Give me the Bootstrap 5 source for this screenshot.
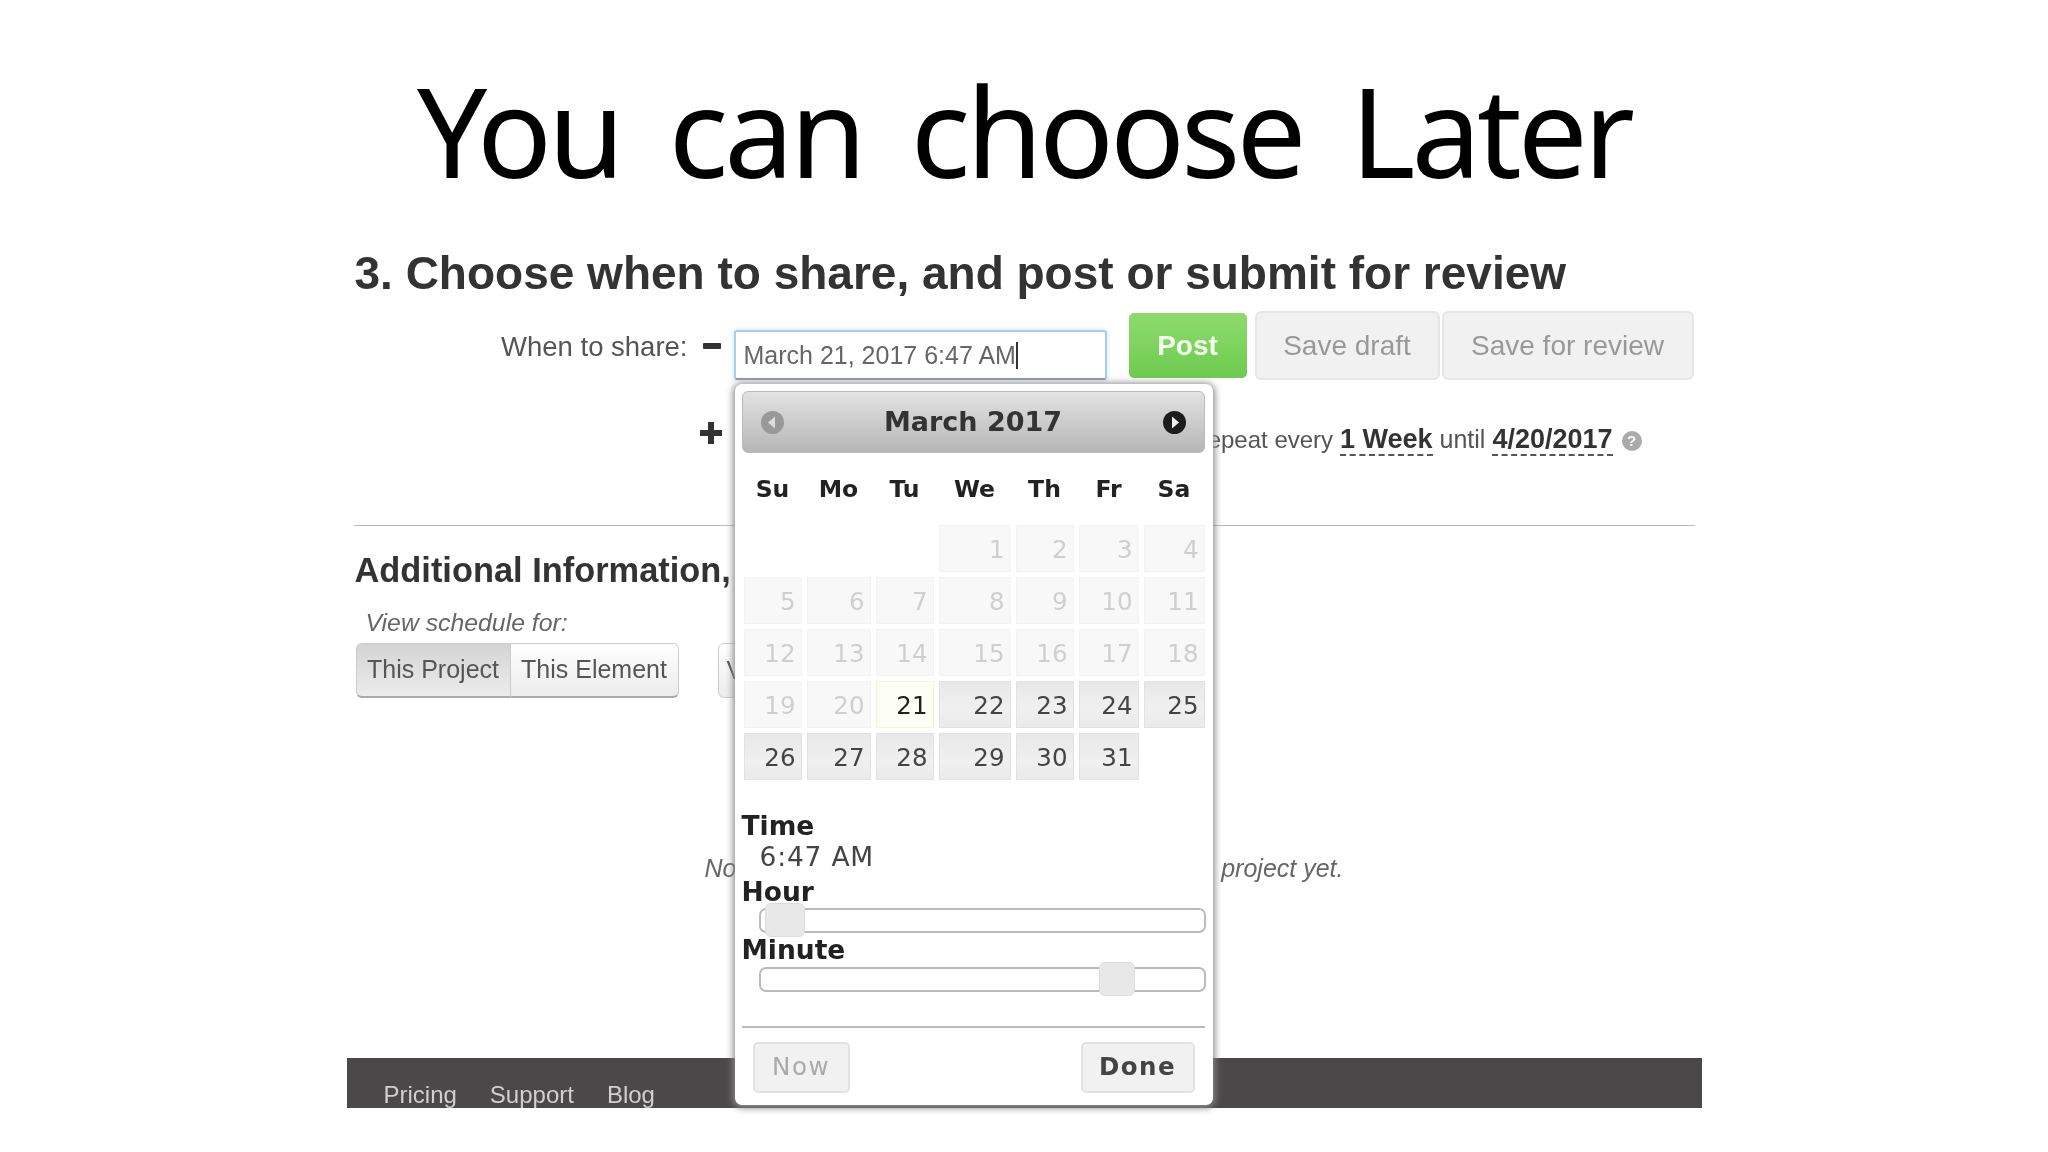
<!DOCTYPE html>
<html lang="en">
<head>
<meta charset="utf-8">
<title>You can choose Later</title>
<link href="https://cdn.jsdelivr.net/npm/bootstrap@5.3.0/dist/css/bootstrap.min.css" rel="stylesheet">
<style>
html,body{margin:0;background:#fff;height:1152px;overflow:hidden}
body{font-family:"Liberation Sans",Arial,sans-serif;color:#333}
.slide-title{height:240px;padding-top:45px;margin:0;text-align:center;font-family:"Noto Sans",sans-serif;font-weight:400;font-size:124px;line-height:170px;letter-spacing:-4px;word-spacing:20px;color:#000}
.shot{position:relative;width:1355px;height:868px;margin:0 auto;padding-top:11px;filter:blur(.5px)}
.step-title{margin:0 0 0 8px;font:700 46px/44px "Liberation Sans",sans-serif;color:#333}
.share-row{height:69px;margin-top:16px}
.share-label{width:341px;text-align:right;font-size:27.5px;line-height:71px;color:#555}
.mini-icon{display:block;flex:none}
.when-input.form-control{width:373px;height:50px;margin:19px 0 0 13px;padding:0 8px;border:2px solid #a9cfe8;border-bottom-color:#999;border-radius:3px;box-shadow:0 0 5px #bfe0f5;font-size:25px;line-height:46px;color:#666;background:#fff}
.caret-bar{display:inline-block;width:2px;height:27px;background:#333;vertical-align:-5px}
.btn.post-btn{width:118px;height:65px;margin:2px 0 0 22px;padding:0;border:0;border-radius:5px;background:linear-gradient(#8edb6c,#6ecb50);color:#f4fff0;font-weight:700;font-size:28px}
.btn.save-btn{height:69px;padding:0;border:2px solid #e6e6e6;border-radius:6px;background:#f1f1f1;color:#999;font-size:28px}
.repeat-row{height:44px;margin-top:37px}
.repeat-text{margin-left:auto;padding-right:60px;font-size:25px;line-height:44px;color:#555}
.repeat-lead{font-size:24px}
.repeat-text b{color:#333;font-size:27px;border-bottom:2px dashed #555;padding-bottom:0}
.help-dot{display:inline-block;width:20px;height:20px;margin-left:9px;border-radius:50%;background:#aaa;color:#fff;font-size:15px;font-weight:700;line-height:20px;text-align:center;vertical-align:2px}
.shot-rule{margin:64px 7px 0;border:0;border-top:1px solid #bbb;opacity:1}
.extra-title{margin:24px 0 0 8px;font:700 34.4px/40px "Liberation Sans",sans-serif;color:#333}
.view-label{margin:18px 0 0 19px;font-style:italic;font-size:24.8px;line-height:30px;color:#666}
.scope-row{margin:5px 0 0 9px;height:55px}
.btn-group .btn.scope-btn{height:55px;padding:0;border:1px solid #ccc;border-bottom:2px solid #aaa;background:linear-gradient(#fff,#ececec);color:#555;font-size:25px}
.btn-group .btn.scope-btn.picked{background:linear-gradient(#d4d4d4,#ececec)}
.btn.peek-btn{width:60px;height:55px;margin-left:39px;padding:0 8px;text-align:left;border:1px solid #ccc;background:linear-gradient(#fff,#ececec);color:#555;font-size:25px}
.empty-note{margin-top:155px;padding:0 358px;font-style:italic;font-size:25px;line-height:30px;color:#666}
.shot-foot{position:absolute;left:0;right:0;bottom:0;height:50px;overflow:hidden;background:#4a4849;padding:23px 0 0 37px;gap:33px;font-size:24px;line-height:28px}
.shot-foot a{color:#d0d0d0;text-decoration:none}
.dt-picker{position:absolute;left:388px;top:144px;width:478px;height:721px;padding:7px 8px 0 7px;background:#fff;border-radius:7px;box-shadow:0 1px 7px 2px #8c8c8c;font-family:"DejaVu Sans",Verdana,sans-serif;color:#333;z-index:5}
.dt-head{height:62px;padding:0 18px;border-radius:6px;border:1px solid #bbb;background:linear-gradient(#e2e2e2,#b6b6b6);font-weight:700;font-size:27px}
.dt-week,.dt-days{display:grid;grid-template-columns:58px 64px 58px 72px 58px 60px 61px;column-gap:5px;margin-left:2px}
.dt-week{margin-top:16px;height:40px;line-height:40px;text-align:center;font-weight:700;font-size:23.5px;color:#222}
.dt-days{margin-top:16px;row-gap:5px;grid-auto-rows:47px;font-size:24.5px;text-align:right}
.dt-cell{padding:0 5px;line-height:47px;border:1px solid #e2e2e2;background:linear-gradient(#e8e8e8,#f0f0f0 60%,#eaeaea);color:#444}
.dt-cell.off{border-color:#f3f3f3;background:#f8f8f8;color:#cfcfcf}
.dt-cell.today{border-color:#f2f6d6;background:#fdfef4;color:#222}
.dt-cap{font-weight:700;font-size:26.5px;line-height:28px;color:#222}
.dt-value{padding-left:18px;margin-top:2px;font-size:26.5px;line-height:30px;letter-spacing:.8px;color:#444}
.dt-track{position:relative;height:25px;margin:0 -1px 0 17px;border:2px solid #bbb;border-radius:7px;background:#fff}
.dt-thumb{position:absolute;top:-7px;height:34px;border-radius:6px;background:#e8e8e8;border:1px solid #ddd}
.dt-rule{margin:34px 0 0;border:0;border-top:2px solid #bbb;opacity:1}
.btn.dt-btn{height:51px;padding:0;border:2px solid #e2e2e2;border-radius:5px;background:#f1f1f1;font-family:"DejaVu Sans",sans-serif;font-size:24.5px;font-weight:700;letter-spacing:1.5px}
.btn.dt-now{width:97px;margin-left:11px;color:#aaa;font-weight:400}
.btn.dt-done{width:114px;margin-right:10px;color:#444}
.thumb-hour{left:4px;width:40px}
.thumb-minute{left:338px;width:36px}
</style>
</head>
<body>
<h1 class="slide-title">You can choose Later</h1>
<main class="shot">
  <h2 class="step-title">3. Choose when to share, and post or submit for review</h2>
  <div class="share-row d-flex align-items-start">
    <div class="share-label">When to share:</div>
    <svg class="mini-icon" style="margin:32px 0 0 15px" width="18" height="6" viewBox="0 0 18 6"><rect width="18" height="6" rx="1" fill="#333"/></svg>
    <div class="when-input form-control">March 21, 2017 6:47 AM<span class="caret-bar"></span></div>
    <button class="btn post-btn" type="button">Post</button>
    <button class="btn save-btn" style="width:185px;margin-left:8px" type="button">Save draft</button>
    <button class="btn save-btn" style="width:252px;margin-left:2px" type="button">Save for review</button>
  </div>
  <div class="repeat-row d-flex align-items-start">
    <svg class="mini-icon" style="margin:5px 0 0 353px" width="22" height="22" viewBox="0 0 22 22"><path d="M8 0h6v8h8v6h-8v8H8v-8H0V8h8z" fill="#333"/></svg>
    <div class="repeat-text"><span class="repeat-lead">Repeat every</span> <b>1 Week</b> until <b>4/20/2017</b><span class="help-dot">?</span></div>
  </div>
  <hr class="shot-rule">
  <h3 class="extra-title">Additional Information,</h3>
  <div class="view-label">View schedule for:</div>
  <div class="scope-row d-flex">
    <div class="btn-group">
      <button class="btn scope-btn picked" style="width:155px" type="button">This Project</button>
      <button class="btn scope-btn" style="width:169px" type="button">This Element</button>
    </div>
    <button class="btn peek-btn" type="button">V</button>
  </div>
  <div class="empty-note d-flex justify-content-between"><span>No</span><span>project yet.</span></div>
  <footer class="shot-foot d-flex"><a href="#">Pricing</a><a href="#">Support</a><a href="#">Blog</a></footer>

  <section class="dt-picker">
    <div class="dt-head d-flex align-items-center justify-content-between">
      <svg width="23" height="23" viewBox="0 0 23 23"><circle cx="11.5" cy="11.5" r="11.5" fill="#999"/><path d="M7 11.5l7-6v12z" fill="#ddd"/></svg>
      <span>March 2017</span>
      <svg width="23" height="23" viewBox="0 0 23 23"><circle cx="11.5" cy="11.5" r="11.5" fill="#1c1c1c"/><path d="M16 11.5l-7-6v12z" fill="#eee"/></svg>
    </div>
    <div class="dt-week"><span>Su</span><span>Mo</span><span>Tu</span><span>We</span><span>Th</span><span>Fr</span><span>Sa</span></div>
    <div class="dt-days">
      <span></span><span></span><span></span>
      <span class="dt-cell off">1</span><span class="dt-cell off">2</span><span class="dt-cell off">3</span><span class="dt-cell off">4</span>
      <span class="dt-cell off">5</span><span class="dt-cell off">6</span><span class="dt-cell off">7</span><span class="dt-cell off">8</span><span class="dt-cell off">9</span><span class="dt-cell off">10</span><span class="dt-cell off">11</span>
      <span class="dt-cell off">12</span><span class="dt-cell off">13</span><span class="dt-cell off">14</span><span class="dt-cell off">15</span><span class="dt-cell off">16</span><span class="dt-cell off">17</span><span class="dt-cell off">18</span>
      <span class="dt-cell off">19</span><span class="dt-cell off">20</span><span class="dt-cell today">21</span><span class="dt-cell">22</span><span class="dt-cell">23</span><span class="dt-cell">24</span><span class="dt-cell">25</span>
      <span class="dt-cell">26</span><span class="dt-cell">27</span><span class="dt-cell">28</span><span class="dt-cell">29</span><span class="dt-cell">30</span><span class="dt-cell">31</span>
    </div>
    <div class="dt-cap" style="margin-top:32px">Time</div>
    <div class="dt-value">6:47 AM</div>
    <div class="dt-cap" style="margin-top:6px">Hour</div>
    <div class="dt-track" style="margin-top:2px"><span class="dt-thumb thumb-hour"></span></div>
    <div class="dt-cap" style="margin-top:3px">Minute</div>
    <div class="dt-track" style="margin-top:3px"><span class="dt-thumb thumb-minute"></span></div>
    <hr class="dt-rule">
    <div class="d-flex justify-content-between" style="margin-top:14px">
      <button class="btn dt-btn dt-now" type="button">Now</button>
      <button class="btn dt-btn dt-done" type="button">Done</button>
    </div>
  </section>
</main>
<script src="https://cdn.jsdelivr.net/npm/bootstrap@5.3.0/dist/js/bootstrap.bundle.min.js"></script>
</body>
</html>
